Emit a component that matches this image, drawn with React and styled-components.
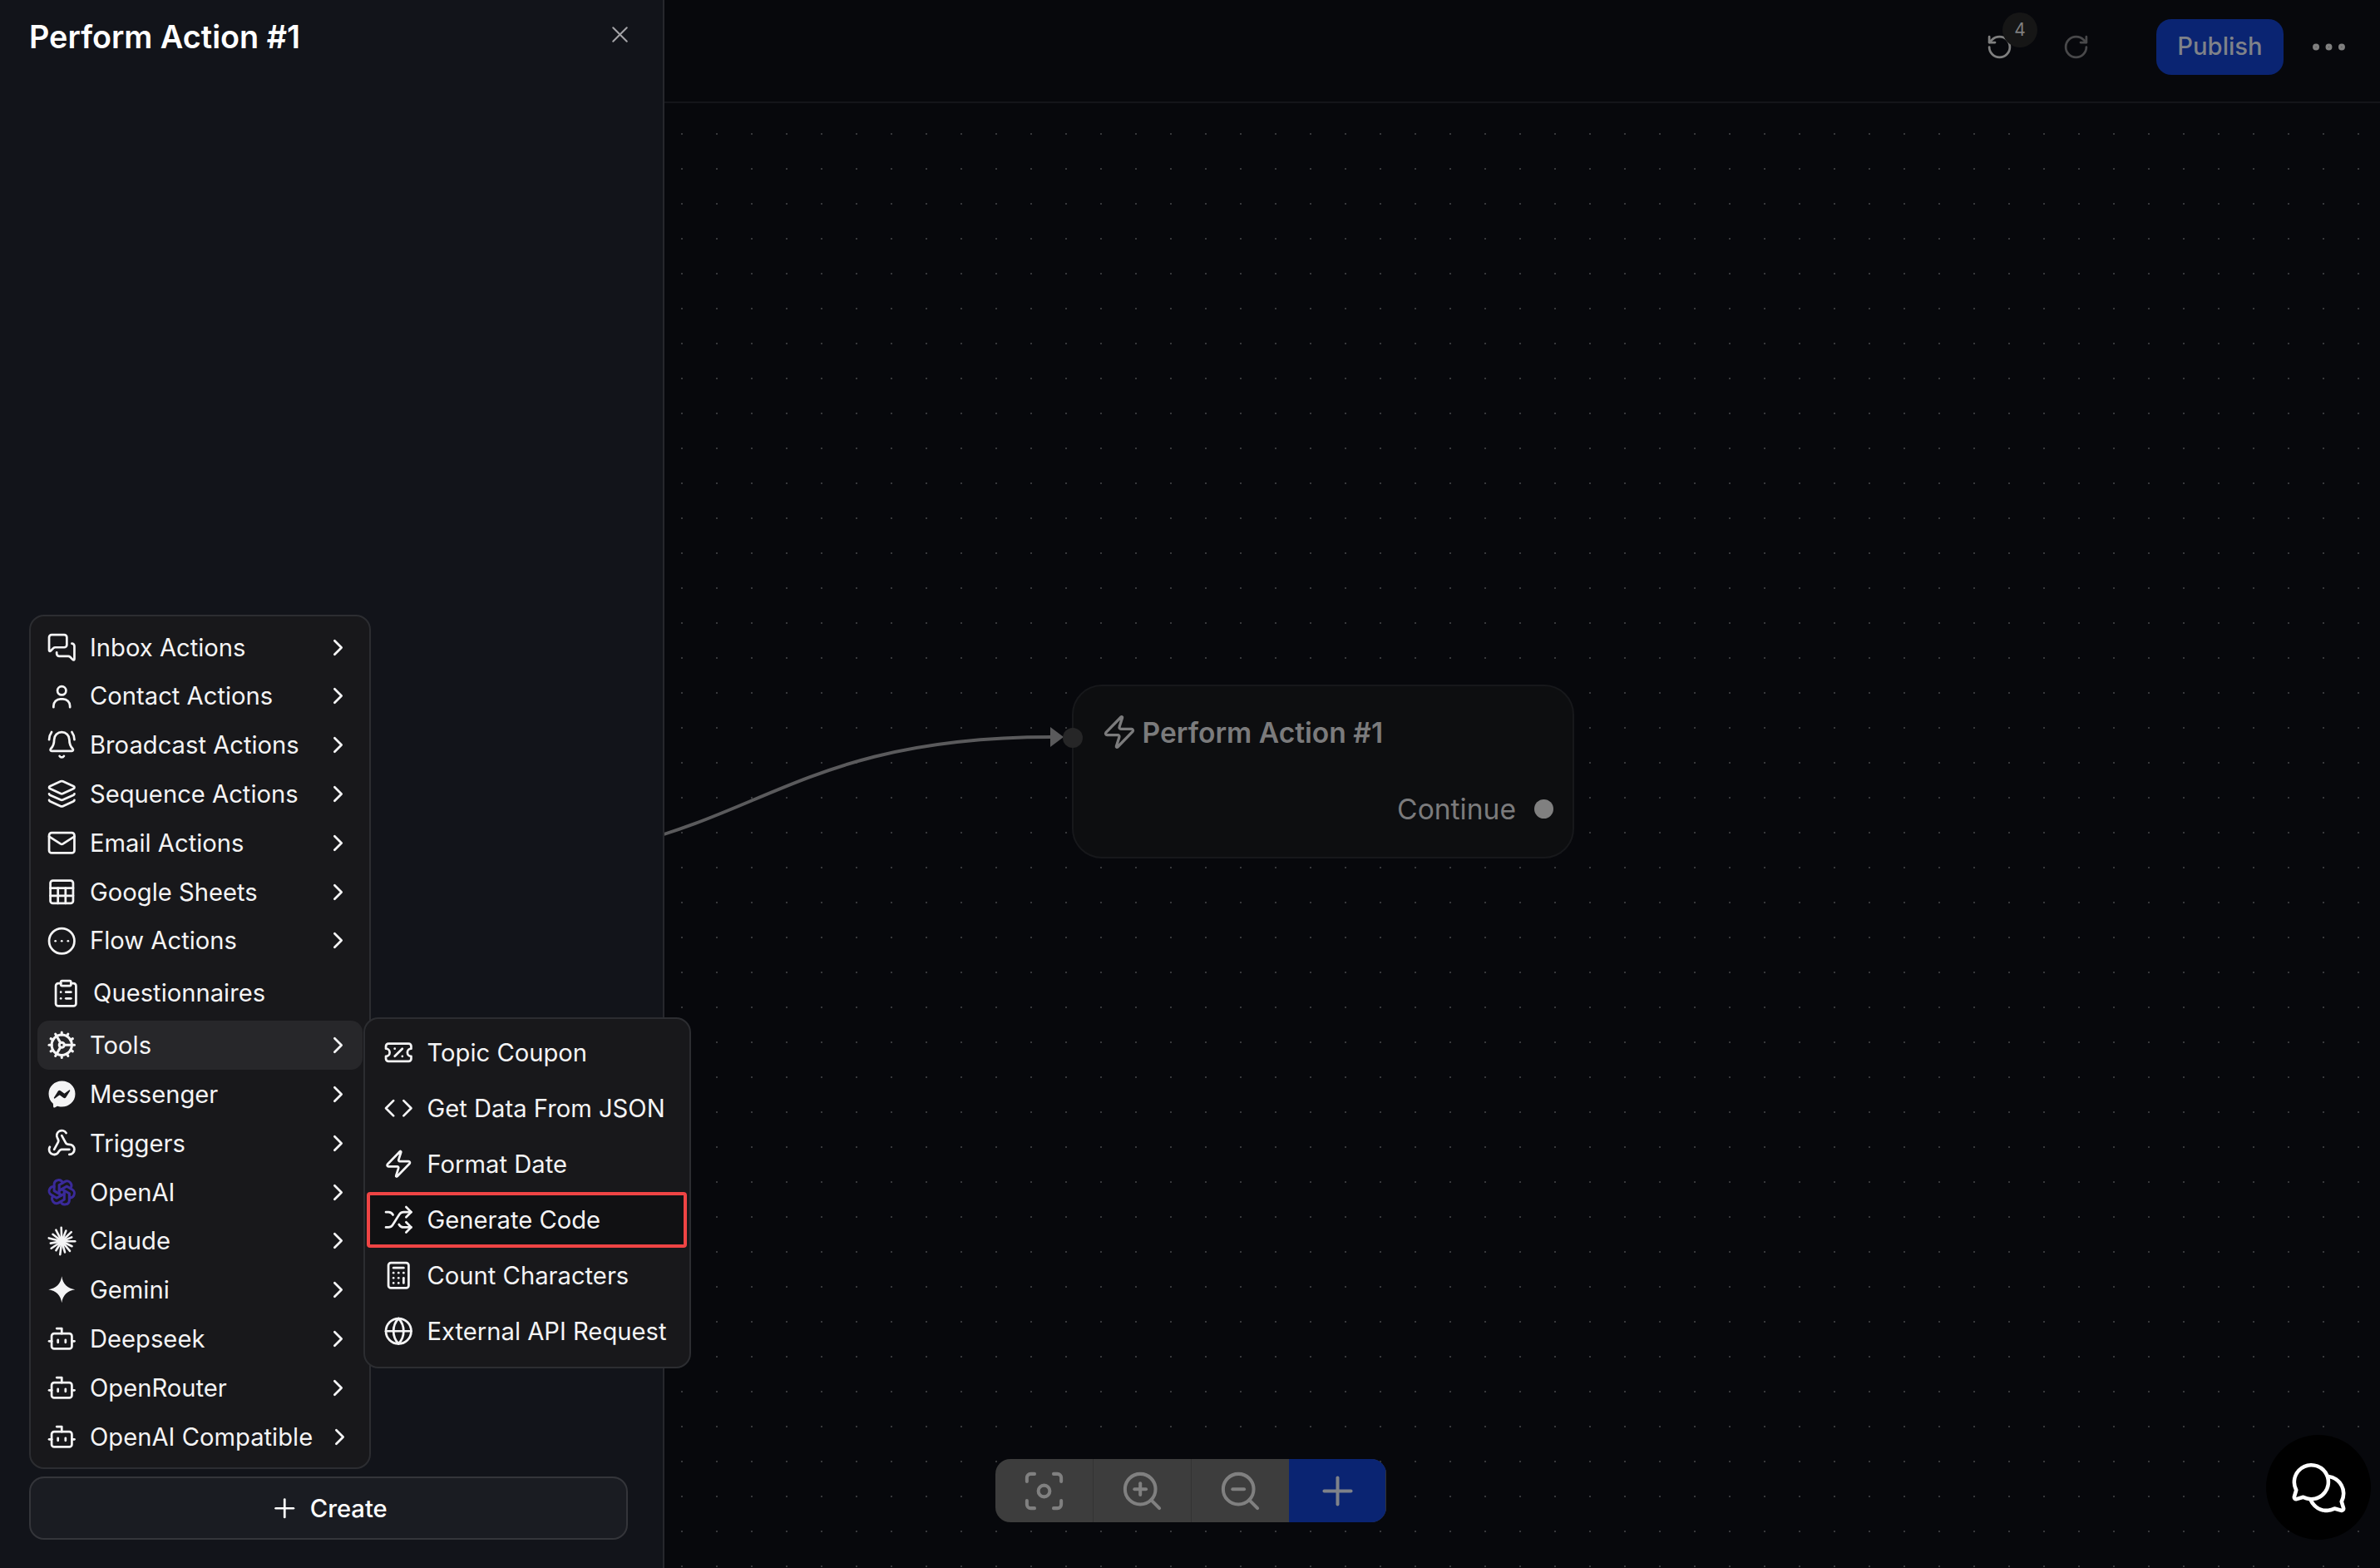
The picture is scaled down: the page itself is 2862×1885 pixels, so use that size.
import React from 'react';
import styled, { createGlobalStyle } from 'styled-components';
import {
  MessagesSquare, BellRing, Layers, Mail, Sheet, CircleEllipsis, ClipboardList, ChevronRight,
  Cog, Webhook, Bot, Plus, TicketPercent, Code, Zap, Shuffle, Calculator, Globe, X,
  RotateCcw, RotateCw, Ellipsis, Focus, ZoomIn, ZoomOut,
} from 'lucide-react';
import { FaFacebookMessenger } from 'react-icons/fa';
import { TbBrandOpenai } from 'react-icons/tb';
import { PiChatsCircle } from 'react-icons/pi';

const BrandIcon = styled(FaFacebookMessenger)`
  margin: 0 1.75px;
`;

const Contact = (props) => (
  <svg viewBox="0 0 24 24" width="36.5" height="36.5" fill="none" stroke="currentColor" strokeWidth="1.8" strokeLinecap="round" {...props}>
    <circle cx="12" cy="7.4" r="3.4" />
    <path d="M5.5 20.5v-1a5.5 5.5 0 0 1 5.5-5.5h2a5.5 5.5 0 0 1 5.5 5.5v1" />
  </svg>
);

const Claude = () => {
  const rays = [[0, 10.5], [26, 9], [50, 10], [74, 9], [97, 10.5], [122, 8.5], [146, 10], [170, 9], [194, 10.5], [218, 9], [243, 10], [268, 10.8], [292, 9], [316, 10.5], [338, 8.5]];
  return (
    <svg viewBox="0 0 24 24" width="36.5" height="36.5" fill="none" stroke="currentColor" strokeWidth="1.7" strokeLinecap="round">
      {rays.map(([a, r]) => (
        <line key={a} x1="12" y1="12" x2={12 + r * Math.cos((a * Math.PI) / 180)} y2={12 + r * Math.sin((a * Math.PI) / 180)} />
      ))}
    </svg>
  );
};

const Gemini = () => (
  <svg viewBox="0 0 24 24" width="36.5" height="36.5" fill="currentColor">
    <path d="M12 1.5C12.8 7.5 16.5 11.2 22.5 12 16.500 12.8 12.8 16.5 12 22.5 11.2 16.5 7.5 12.8 1.5 12 7.5 11.2 11.2 7.5 12 1.5Z" />
  </svg>
);

const GlobalStyle = createGlobalStyle`
  html, body {
    margin: 0;
    height: 100%;
    background: #07080c;
  }
  #root {
    height: 100%;
  }
`;

const iconProps = { size: 36.5, strokeWidth: 1.8 };

const actionItems = [
  { label: 'Inbox Actions', icon: <MessagesSquare {...iconProps} /> },
  { label: 'Contact Actions', icon: <Contact /> },
  { label: 'Broadcast Actions', icon: <BellRing {...iconProps} /> },
  { label: 'Sequence Actions', icon: <Layers {...iconProps} /> },
  { label: 'Email Actions', icon: <Mail {...iconProps} /> },
  { label: 'Google Sheets', icon: <Sheet {...iconProps} /> },
  { label: 'Flow Actions', icon: <CircleEllipsis {...iconProps} /> },
];

const aiItems = [
  { label: 'Messenger', icon: <BrandIcon size={33} /> },
  { label: 'Triggers', icon: <Webhook {...iconProps} /> },
  { label: 'OpenAI', icon: <TbBrandOpenai size={36.5} color="#3a2a99" /> },
  { label: 'Claude', icon: <Claude /> },
  { label: 'Gemini', icon: <Gemini /> },
  { label: 'Deepseek', icon: <Bot {...iconProps} /> },
  { label: 'OpenRouter', icon: <Bot {...iconProps} /> },
  { label: 'OpenAI Compatible', icon: <Bot {...iconProps} /> },
];

const toolItems = [
  { label: 'Topic Coupon', icon: <TicketPercent {...iconProps} /> },
  { label: 'Get Data From JSON', icon: <Code {...iconProps} /> },
  { label: 'Format Date', icon: <Zap {...iconProps} /> },
  { label: 'Generate Code', icon: <Shuffle {...iconProps} />, marked: true },
  { label: 'Count Characters', icon: <Calculator {...iconProps} /> },
  { label: 'External API Request', icon: <Globe {...iconProps} /> },
];

const MenuEntry = ({ item, active }) => (
  <MenuRow $active={active}>
    {item.icon}
    <MenuLabel>{item.label}</MenuLabel>
    <Chevron size={33} />
  </MenuRow>
);

const App = () => (
  <Page>
    <GlobalStyle />
    <Sidebar>
      <SidebarHeader>
        <SidebarTitle>Perform Action #1</SidebarTitle>
        <CloseButton><X size={33} strokeWidth={1.5} /></CloseButton>
      </SidebarHeader>
      <MenuWrap>
        <Menu>
          {actionItems.map((item) => <MenuEntry key={item.label} item={item} />)}
          <PlainRow>
            <ClipboardList {...iconProps} />
            <MenuLabel>Questionnaires</MenuLabel>
          </PlainRow>
          <MenuEntry active item={{ label: 'Tools', icon: <Cog size={36.5} strokeWidth={2} /> }} />
          {aiItems.map((item) => <MenuEntry key={item.label} item={item} />)}
        </Menu>
        <SubMenu>
          {toolItems.map((item) => (
            <SubRow key={item.label} $marked={item.marked}>
              {item.icon}
              <MenuLabel>{item.label}</MenuLabel>
            </SubRow>
          ))}
        </SubMenu>
      </MenuWrap>
      <CreateButton>
        <Plus {...iconProps} />
        Create
      </CreateButton>
    </Sidebar>
    <Main>
      <TopBar>
        <HistoryButton>
          <RotateCcw size={33} strokeWidth={2} />
          <HistoryBadge>4</HistoryBadge>
        </HistoryButton>
        <HistoryButton $disabled>
          <RotateCw size={33} strokeWidth={2} />
        </HistoryButton>
        <PublishButton>Publish</PublishButton>
        <MoreButton><Ellipsis size={53} strokeWidth={1.6} /></MoreButton>
      </TopBar>
      <FlowCanvas>
        <EdgeLayer>
          <path d="M -254 914 C 106 914, 106 762, 466 762" fill="none" stroke="#5a5a5c" strokeWidth="4" />
          <path d="M 464 750 L 480 762 L 464 774 Z" fill="#5a5a5c" />
        </EdgeLayer>
        <FlowNode>
          <InHandle />
          <NodeTitle>
            <Zap size={44} strokeWidth={1.8} />
            Perform Action #1
          </NodeTitle>
          <NodeOutput>
            Continue
            <OutHandle />
          </NodeOutput>
        </FlowNode>
        <ZoomBar>
          <ZoomCell><Focus size={55} strokeWidth={1.75} /></ZoomCell>
          <ZoomCell><ZoomIn size={55} strokeWidth={1.75} /></ZoomCell>
          <ZoomCell><ZoomOut size={55} strokeWidth={1.75} /></ZoomCell>
          <AddCell><Plus size={55} strokeWidth={1.75} /></AddCell>
        </ZoomBar>
        <ChatBubble><PiChatsCircle size={73} /></ChatBubble>
      </FlowCanvas>
    </Main>
  </Page>
);

const Page = styled.div`
  display: flex;
  width: 2862px;
  height: 1885px;
  overflow: hidden;
  font-family: Inter, "Liberation Sans", sans-serif;
  color: #f4f4f5;
`;

const Sidebar = styled.aside`
  position: relative;
  z-index: 2;
  box-sizing: border-box;
  display: flex;
  flex-direction: column;
  flex: 0 0 799px;
  padding: 0 42px 34px 35px;
  background: #12141a;
  border-right: 2px solid #26272c;
`;

const SidebarHeader = styled.div`
  display: flex;
  justify-content: space-between;
  align-items: center;
  height: 88px;
  margin-right: -7px;
  flex-shrink: 0;
`;

const SidebarTitle = styled.h1`
  margin: 0;
  font-size: 37.8px;
  font-weight: 600;
  color: #fff;
`;

const CloseButton = styled.div`
  display: flex;
  margin: -6px 0 0;
  color: #a3a3a6;
`;

const MenuWrap = styled.div`
  position: relative;
  margin-top: auto;
`;

const Menu = styled.div`
  box-sizing: border-box;
  width: 411px;
  padding: 7.5px 8px;
  background: #18181b;
  border: 2px solid #2c2d31;
  border-radius: 18px;
`;

const MenuRow = styled.div`
  display: flex;
  align-items: center;
  gap: 15.5px;
  height: 58.8px;
  padding: 0 13px 0 11px;
  border-radius: 14px;
  background: ${(p) => (p.$active ? '#27272a' : 'transparent')};
  svg {
    flex-shrink: 0;
  }
`;

const PlainRow = styled(MenuRow)`
  height: 67px;
  gap: 14.6px;
  padding-left: 16px;
`;

const MenuLabel = styled.span`
  flex: 1;
  font-size: 29.2px;
  white-space: nowrap;
`;

const Chevron = styled(ChevronRight)`
  color: #f4f4f5;
`;

const SubMenu = styled.div`
  position: absolute;
  left: 402px;
  bottom: 121px;
  box-sizing: border-box;
  width: 394px;
  padding: 7px 3px 9px 2px;
  background: #18181b;
  border: 2px solid #2c2d31;
  border-radius: 18px;
`;

const SubRow = styled.div`
  display: flex;
  align-items: center;
  gap: 16px;
  height: 67px;
  padding-left: 20px;
  border-radius: 4px;
  background: ${(p) => (p.$marked ? '#111113' : 'transparent')};
  box-shadow: ${(p) => (p.$marked ? 'inset 0 0 0 4px #ef4444' : 'none')};
  svg {
    flex-shrink: 0;
  }
`;

const CreateButton = styled.div`
  box-sizing: border-box;
  display: flex;
  justify-content: center;
  align-items: center;
  gap: 12px;
  height: 76px;
  margin-top: 9px;
  flex-shrink: 0;
  width: 720px;
  background: #1a1c22;
  border: 2px solid #34353a;
  border-radius: 18px;
  font-size: 29.2px;
  font-weight: 500;
  color: #fff;
`;

const Main = styled.main`
  flex: 1;
  display: flex;
  flex-direction: column;
  min-width: 0;
`;

const TopBar = styled.header`
  box-sizing: border-box;
  display: flex;
  justify-content: flex-end;
  align-items: center;
  flex-shrink: 0;
  height: 124px;
  padding: 0 35.5px 10px 0;
  background: #07080c;
  border-bottom: 2px solid #14151a;
`;

const HistoryButton = styled.div`
  position: relative;
  display: flex;
  margin-right: ${(p) => (p.$disabled ? '80px' : '59px')};
  color: ${(p) => (p.$disabled ? '#48484a' : '#7f7f7f')};
`;

const HistoryBadge = styled.span`
  position: absolute;
  top: -25px;
  left: 20px;
  display: flex;
  justify-content: center;
  align-items: center;
  width: 42px;
  height: 42px;
  border-radius: 50%;
  background: #161616;
  color: #7f7f7f;
  font-size: 21px;
`;

const PublishButton = styled.div`
  display: flex;
  justify-content: center;
  align-items: center;
  box-sizing: border-box;
  width: 153px;
  height: 67px;
  padding-bottom: 2px;
  border-radius: 18px;
  background: #0a2472;
  color: #7f8289;
  font-size: 29.2px;
  font-weight: 500;
`;

const MoreButton = styled.div`
  display: flex;
  margin-left: 27.5px;
  color: #808080;
`;

const FlowCanvas = styled.div`
  position: relative;
  flex: 1;
  background-color: #07080c;
  background-image: radial-gradient(circle, #37383b 1.1px, transparent 1.4px);
  background-size: 42px 42px;
  background-position: 0 16px;
`;

const EdgeLayer = styled.svg`
  position: absolute;
  inset: 0;
  width: 100%;
  height: 100%;
`;

const FlowNode = styled.div`
  position: absolute;
  left: 490px;
  top: 699px;
  box-sizing: border-box;
  width: 604px;
  height: 209px;
  padding: 33px 23px 0 32.5px;
  background: #0d0e10;
  border: 2px solid #17181b;
  border-radius: 36px;
  color: #7b7b7c;
`;

const InHandle = styled.span`
  position: absolute;
  left: -13px;
  top: 50px;
  width: 24px;
  height: 24px;
  border-radius: 50%;
  background: #262627;
`;

const NodeTitle = styled.div`
  display: flex;
  align-items: center;
  gap: 6px;
  font-size: 33.6px;
  font-weight: 600;
`;

const NodeOutput = styled.div`
  display: flex;
  justify-content: flex-end;
  align-items: center;
  gap: 22px;
  margin-top: 50px;
  font-size: 33.6px;
`;

const OutHandle = styled.span`
  width: 23px;
  height: 23px;
  border-radius: 50%;
  background: #808080;
`;

const ZoomBar = styled.div`
  position: absolute;
  left: 398px;
  top: 1630px;
  display: flex;
  width: 470px;
  height: 76px;
  border-radius: 18px;
  overflow: hidden;
  background: #3d3d3d;
  color: #808080;
`;

const ZoomCell = styled.div`
  display: flex;
  justify-content: center;
  align-items: center;
  flex: 0 0 117px;
  border-right: 1px solid #333;
  &:nth-child(3) {
    border-right: none;
  }
`;

const AddCell = styled(ZoomCell)`
  flex: 1;
  background: #0a2472;
  color: #7f8289;
`;

const ChatBubble = styled.div`
  position: absolute;
  right: 11px;
  bottom: 34px;
  display: flex;
  justify-content: center;
  align-items: center;
  width: 126px;
  height: 126px;
  border-radius: 50%;
  background: #000;
  color: #fff;
`;

export default App;
